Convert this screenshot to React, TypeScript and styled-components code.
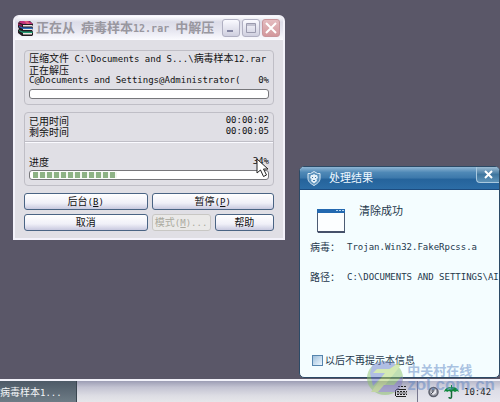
import React from "react";
import styled, { createGlobalStyle } from "styled-components";

const Global = createGlobalStyle`
  * { box-sizing: border-box; }
  body { margin: 0; font-family: "DejaVu Sans Mono", "Noto Sans CJK SC", monospace; }
  button, input { font: inherit; margin: 0; }
`;

const Desktop = styled.div`
  position: relative;
  display: flex;
  flex-direction: column;
  min-height: 100vh;
  overflow: hidden;
  background: #5a5768;
`;

const Workspace = styled.main`
  position: relative;
  flex: 1;
`;

const Cjk = styled.span<{ $size?: number }>`
  font-family: "Noto Sans CJK SC", sans-serif;
  font-size: ${(p) => p.$size ?? 10}px;
`;

const Dialog = styled.section`
  position: absolute;
  left: 13px;
  top: 15px;
  width: 272px;
  border: 2px solid #f3f2fa;
  border-top-width: 1px;
  border-radius: 6px 6px 0 0;
  background: #e0dfe5;
  color: #111;
  font-size: 9px;
  line-height: 11px;
`;

const TitleBar = styled.header`
  display: flex;
  align-items: center;
  gap: 2px;
  height: 24px;
  padding: 0 3px;
  border-radius: 5px 5px 0 0;
  background: linear-gradient(#fdfdff, #dcdce8 25%, #e6e6f0 60%, #fbfbff);
`;

const DialogTitle = styled.h1`
  flex: 1;
  margin: 0;
  color: #99979f;
  font-size: 10px;
  font-weight: 700;
  line-height: 20px;
  white-space: nowrap;
`;

const WindowButton = styled.button<{ $danger?: boolean }>`
  display: grid;
  place-items: center;
  width: 18px;
  height: 18px;
  padding: 0;
  border: 1px solid ${(p) => (p.$danger ? "#c9959b" : "#b0b0c2")};
  border-radius: 3px;
  background: ${(p) => (p.$danger ? "linear-gradient(#e4bcc0, #d3979c)" : "linear-gradient(#fafaff, #cfcfdf)")};
`;

const DialogBody = styled.div`
  display: grid;
  gap: 7px;
  padding: 10px 9px 7px;
`;

const Group = styled.div`
  padding: 2px 4px 5px;
  border: 1px solid #bfbec6;
  border-radius: 4px;
`;

const Row = styled.div`
  display: flex;
  align-items: center;
  justify-content: space-between;
  height: 11px;
  white-space: pre;
`;

const Divider = styled.hr`
  margin: 4px -4px 13px;
  border: 0;
  border-top: 1px solid #bfbec6;
  border-bottom: 1px solid #fafaff;
`;

const Track = styled.div`
  height: 10px;
  margin-top: 3px;
  padding: 1px 3px;
  border: 1px solid #77777b;
  border-radius: 3px;
  background: #fff;
`;

const Fill = styled.div`
  height: 100%;
  background: repeating-linear-gradient(90deg, #8db285 0 5px, #f2f7f0 5px 7px);
`;

const Actions = styled.div`
  display: grid;
  grid-template-columns: 123fr 59fr 59fr;
  gap: 4px;
`;

const ActionButton = styled.button<{ $wide?: boolean }>`
  grid-column: ${(p) => (p.$wide ? "span 2" : "auto")};
  height: 17px;
  padding: 0;
  border: 1px solid #4a6484;
  border-radius: 3px;
  background: linear-gradient(#fff, #f0f0f8 60%, #c8c9df);
  color: #111;
  line-height: 14px;
  white-space: nowrap;
  &:disabled {
    border-color: #c8c7c4;
    background: #eae9e8;
    color: #aaa99f;
  }
`;

const Cursor = styled.svg`
  position: absolute;
  left: 256px;
  top: 158px;
`;

const Popup = styled.section`
  position: absolute;
  right: 0;
  bottom: 1px;
  width: 201px;
  min-height: 212px;
  display: flex;
  flex-direction: column;
  overflow: hidden;
  border: 1px solid #2c4a66;
  border-radius: 5px;
  background: #f4fdff;
  color: #24384c;
  font-size: 9px;
`;

const PopupHeader = styled.header`
  display: flex;
  align-items: center;
  gap: 8px;
  height: 23px;
  padding-left: 7px;
  border-bottom: 1px solid #1c4c80;
  background: linear-gradient(#8fb6d4, #4e88b6 25%, #3c78ab 50%, #25639b 55%, #2c6da6);
  color: #eef8ff;
`;

const PopupTitle = styled.h2`
  flex: 1;
  margin: 0;
  font-size: 11px;
  font-weight: 400;
  line-height: 16px;
`;

const PopupClose = styled.button`
  align-self: flex-start;
  display: grid;
  place-items: center;
  width: 23px;
  height: 16px;
  padding: 0;
  border: 1px solid #a9c9df;
  border-top: 0;
  border-right: 0;
  border-radius: 0 0 0 4px;
  background: linear-gradient(#9dbdd4, #3f769f 50%, #5e93b8);
`;

const PopupBody = styled.div`
  flex: 1;
  display: flex;
  flex-direction: column;
  padding: 12px 0 11px 10px;
`;

const Result = styled.div`
  display: flex;
  gap: 14px;
  height: 37px;
  padding-left: 7px;
  line-height: 16px;
`;

const Details = styled.dl`
  display: grid;
  grid-template-columns: 37px 1fr;
  row-gap: 13px;
  margin: 0;
  line-height: 16px;
  white-space: nowrap;
  dd { margin: 0; }
`;

const CheckLabel = styled.label`
  display: flex;
  align-items: center;
  gap: 2px;
  margin-top: auto;
  padding-left: 2px;
  line-height: 12px;
`;

const CheckBox = styled.input`
  appearance: none;
  width: 11px;
  height: 11px;
  border: 1px solid #5585ae;
  background: linear-gradient(135deg, #9fc0dc, #eef8ff);
`;

const TaskBar = styled.footer`
  display: flex;
  height: 23px;
  border-top: 2px solid #f2f2fa;
  background: linear-gradient(#9c9db4, #c3c3d2 30%, #dddde4 70%, #e6e6ea);
`;

const TaskButton = styled.button`
  width: 77px;
  padding: 0;
  border: 0;
  border-right: 1px solid #3a4650;
  background: linear-gradient(#4d5a67, #6e7c86);
  color: #f4f6f8;
  font-size: 9px;
  text-align: left;
  white-space: nowrap;
`;

const InputMethod = styled.div`
  display: flex;
  align-items: center;
  margin-left: auto;
  padding-right: 10px;
`;

const Tray = styled.div`
  display: flex;
  align-items: center;
  gap: 5px;
  width: 83px;
  padding-left: 10px;
  border-left: 1px solid #77778e;
  background: linear-gradient(#b9bacb, #dcdce6 40%, #e6e6ee);
  color: #222;
  font-size: 9px;
`;

const Watermark = styled.div`
  position: absolute;
  right: 5px;
  bottom: 7px;
  display: flex;
  align-items: center;
  gap: 4px;
  opacity: 0.5;
  pointer-events: none;
  color: #5f86c4;
`;

const WatermarkText = styled.div`
  font: 700 13px/14px "Noto Sans CJK SC", sans-serif;
  strong { display: block; font: 700 17px/16px "Liberation Sans", sans-serif; }
`;

function ArchiveIcon() {
  return (
    <svg width="16" height="15" viewBox="0 0 16 15">
      <path d="M0 2 2 0h10l3 3v1l-1 1 1 2-1 2 1 2v3l-1 1H4l-4-3V9l1-1-1-2z" fill="#221a20" />
      <path d="M1 1.500 2.500 0H11l4 3H5z" fill="#c2307c" />
      <path d="M5 4h9v1.500H5zM5 8h9v1H5zM5 12h9v1.500H5z" fill="#ece4e0" />
      <path d="M1 6l4 2h10l-1-1.500H5L1 5z" fill="#2d6cc0" />
      <path d="M1 10l4 2h10l-1-1.500H5L1 9z" fill="#1f9a72" />
      <path d="M0 2l4 2v2L0 4z" fill="#8c1f50" />
      <path d="M6 0h3l3 3H9z" fill="#e0607a" />
    </svg>
  );
}

function ShieldIcon() {
  return (
    <svg width="14" height="15" viewBox="0 0 14 15">
      <path d="M1 2.500h2.500L7 .5l3.500 2H13v5c0 3-2.500 5-6 7-3.500-2-6-4-6-7z" fill="#5d93bd" stroke="#dcebf5" />
      <path d="M4 4h1.500L7 3l1.500 1H10l1 3-1.500 1L10 10l-3 2.500L4 10l.5-2L3 7z" fill="#e4f0f8" />
      <path d="M5 6h1v1H5zM8 6h1v1H8zM6 9h2v1H6z" fill="#3f76a5" />
    </svg>
  );
}

function WindowIcon() {
  return (
    <svg width="28" height="38" viewBox="0 0 28 38">
      <path d="M.5 7.500h27v22H.5z" fill="#fcfeff" stroke="#4c5c74" />
      <path d="M0 29h28v2H1z" fill="#46516a" />
      <path d="M0 7h28v4H0z" fill="#2469b0" />
      <path d="M19 8.500h2m1 0h2m1 0h2" stroke="#b8d8f2" />
    </svg>
  );
}

export default function App() {
  return (
    <>
      <Global />
      <Desktop>
        <Workspace>
          <Dialog>
            <TitleBar>
              <ArchiveIcon />
              <DialogTitle>
                <Cjk $size={13}>正在从</Cjk> <Cjk $size={13}>病毒样本</Cjk>12.rar <Cjk $size={13}>中解压</Cjk>
              </DialogTitle>
              <WindowButton aria-label="最小化">
                <svg width="12" height="12"><path d="M2 9h6" stroke="#8587a3" strokeWidth="2" /></svg>
              </WindowButton>
              <WindowButton aria-label="最大化">
                <svg width="12" height="12"><path d="M1.500 1.500h9v9h-9zM1 3h10" stroke="#9a9aae" fill="none" /></svg>
              </WindowButton>
              <WindowButton $danger aria-label="关闭">
                <svg width="12" height="12"><path d="m1 1 10 10m0-10-10 10" stroke="#fff" strokeWidth="2" /></svg>
              </WindowButton>
            </TitleBar>
            <DialogBody>
              <Group>
                <Row><span><Cjk>压缩文件</Cjk> C:\Documents and S...\<Cjk>病毒样本</Cjk>12.rar</span></Row>
                <Row><Cjk>正在解压</Cjk></Row>
                <Row><span>C@Documents and Settings@Administrator(</span><span>0%</span></Row>
                <Track role="progressbar" aria-label="当前文件" aria-valuenow={0} />
              </Group>
              <Group>
                <Row><Cjk>已用时间</Cjk><span>00:00:02</span></Row>
                <Row><Cjk>剩余时间</Cjk><span>00:00:05</span></Row>
                <Divider />
                <Row><Cjk>进度</Cjk><span>34%</span></Row>
                <Track role="progressbar" aria-label="进度" aria-valuenow={34}><Fill style={{ width: "36%" }} /></Track>
              </Group>
              <Actions>
                <ActionButton><Cjk>后台</Cjk>(<u>B</u>)</ActionButton>
                <ActionButton $wide><Cjk>暂停</Cjk>(<u>P</u>)</ActionButton>
                <ActionButton><Cjk>取消</Cjk></ActionButton>
                <ActionButton disabled><Cjk>模式</Cjk>(<u>M</u>)...</ActionButton>
                <ActionButton><Cjk>帮助</Cjk></ActionButton>
              </Actions>
            </DialogBody>
          </Dialog>
          <Popup>
            <PopupHeader>
              <ShieldIcon />
              <PopupTitle><Cjk $size={11}>处理结果</Cjk></PopupTitle>
              <PopupClose aria-label="关闭">
                <svg width="9" height="9"><path d="m1 1 7 7m0-7-7 7" stroke="#fff" strokeWidth="2" /></svg>
              </PopupClose>
            </PopupHeader>
            <PopupBody>
              <Result>
                <WindowIcon />
                <Cjk $size={11}>清除成功</Cjk>
              </Result>
              <Details>
                <dt><Cjk>病毒：</Cjk></dt><dd>Trojan.Win32.FakeRpcss.a</dd>
                <dt><Cjk>路径：</Cjk></dt><dd>C:\DOCUMENTS AND SETTINGS\AI</dd>
              </Details>
              <CheckLabel><CheckBox type="checkbox" /><Cjk>以后不再提示本信息</Cjk></CheckLabel>
            </PopupBody>
          </Popup>
          <Cursor width="14" height="20" viewBox="0 0 14 20">
            <path d="M1 1v14l3.500-3 3 6.500 3-1.500-3-6H12z" fill="#fff" stroke="#222" />
          </Cursor>
        </Workspace>
        <TaskBar>
          <TaskButton><Cjk>病毒样本</Cjk>1...</TaskButton>
          <InputMethod>
            <svg width="13" height="13" viewBox="0 0 13 13">
              <path d="M2 4.500h10M2 11.500h10M1.500 5v6M4 1.500h2m1 0h2m1 0h2M4 3v1" stroke="#222" fill="none" />
              <path d="M3 6.500h10M3 9.500h10" stroke="#222" strokeDasharray="2 1" />
              <path d="M3 8h10" stroke="#555" />
            </svg>
          </InputMethod>
          <Tray>
            <svg width="11" height="12" viewBox="0 0 11 12">
              <circle cx="5.500" cy="6" r="4.500" fill="#a4a5ae" stroke="#5c5f6c" strokeWidth="1.500" />
              <path d="M2 5l3 2 3-4v4L5 9z" fill="#e8e8ee" />
              <path d="M5 3v3l-2 2" stroke="#4c4f5a" fill="none" />
            </svg>
            <svg width="15" height="14" viewBox="0 0 15 14">
              <path d="M0 7c1-4 4-5 7-5V0h1v2c3 0 6 1 7 5l-2-1-2 1-2-1-2 1-2-1-2 1-1-1z" fill="#0f8a3e" />
              <path d="M7.500 6v6c0 1.500-2.500 1.500-2.500 0" fill="none" stroke="#166a36" strokeWidth="1.500" />
              <path d="M4 5c0-1 1-2 3-2" stroke="#8fd3a6" fill="none" />
            </svg>
            <span>10:42</span>
          </Tray>
        </TaskBar>
        <Watermark>
          <svg width="36" height="34" viewBox="0 0 36 34">
            <ellipse cx="18" cy="17" rx="18" ry="17" fill="#8cc36a" />
            <path d="M5 5C9 0 24-2 29 4L22 8 6 25 3 12z" fill="#6f80c8" />
            <path d="M31 2 23 8H10L6 12H18L4 31H27l4-7H18L34 4z" fill="#b5d96c" />
            <path d="M35 15c2 8-2 14-7 16H11l6-7h10z" fill="#7d78bd" />
          </svg>
          <WatermarkText>中关村在线<strong>zol.com.cn</strong></WatermarkText>
        </Watermark>
      </Desktop>
    </>
  );
}
